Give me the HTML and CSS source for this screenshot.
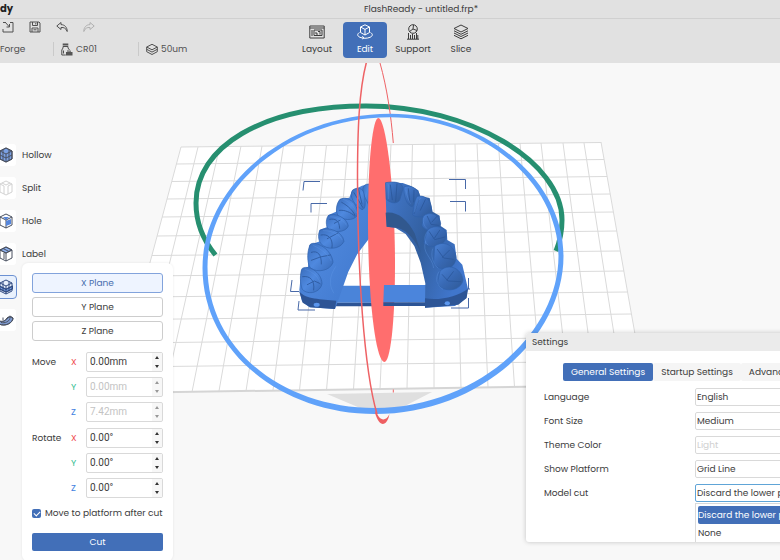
FILE: index.html
```html
<!DOCTYPE html>
<html lang="en">
<head>
<meta charset="utf-8">
<title>FlashReady - untitled.frp*</title>
<link rel="stylesheet" href="styles.css">
</head>
<body>
<div class="app">
  <header class="header">
    <div class="titlebar">
      <strong class="brand">dy</strong>
      <h1 class="doc-title">FlashReady - untitled.frp*</h1>
    </div>
    <div class="toolbar">
      <div class="toolbar-left">
        <div class="file-actions">
          <button class="icon-btn" aria-label="Import"><svg viewBox="0 0 12 12"><path d="M4 1.500H1M1 8v3h10V1.500H8M3 1l4.500 5M7.500 3v3H4.500"/></svg></button>
          <button class="icon-btn" aria-label="Save"><svg viewBox="0 0 12 12"><path d="M1 1h9l1 1v9H1zM3.500 1v3.500h5V1M3 11V7h6v4M4.500 8.800h3M6.800 2v1.500"/></svg></button>
          <button class="icon-btn" aria-label="Undo"><svg viewBox="0 0 12 12"><path d="M5 1.500.8 5 5 8.500V6.500c3-.3 4.800.7 6.200 4C11.200 6.500 9 3.700 5 3.600z"/></svg></button>
          <button class="icon-btn" aria-label="Redo" disabled><svg viewBox="0 0 12 12"><path d="M7 1.500 11.200 5 7 8.500V6.500c-3-.3-4.800.7-6.200 4C.8 6.500 3 3.700 7 3.600z"/></svg></button>
        </div>
        <div class="profile">
          <span class="profile-item machine">Forge</span>
          <span class="profile-item resin"><svg viewBox="0 0 12 13"><path d="M2 3.500h5v1.500l1.500 2M2 3.500v1.500L.8 7v5h4M2.500 7.500v3"/><path class="solid" d="M1.700.5h5.600v2H1.700zM5 9h6.500v3.500H5z"/><path d="M6 8l4 .2"/></svg>CR01</span>
          <span class="profile-item layer"><svg viewBox="0 0 12 12"><path d="M6 .8 11.300 3.500 6 6.300.7 3.500zM.7 5.800 6 8.600l5.300-2.800M.7 8.200 6 11l5.300-2.800"/><path d="M.7 3.500v4.700M11.300 3.500v4.700"/></svg>50um</span>
        </div>
      </div>
      <nav class="modes">
        <button class="mode"><svg viewBox="0 0 16 16"><path d="M.8 2h14.400v12H.8zM.8 4h14.400M3 6v6M5 6h8v5.500H5zM7 8v2h2M11 7.500v3M9 7.500h2"/></svg>Layout</button>
        <button class="mode active"><svg viewBox="0 0 16 16"><path d="M8 .8 12.500 3v5.500L8 11 3.500 8.500V3zM3.500 3 8 5.400 12.500 3M8 5.400V11"/><path d="M2.500 8.500C0 10 0 12 3 13.300c3 1.300 7 1.300 10 0 3-1.300 3-3.300.5-4.800M5 12.500l2 1.200L5.300 15"/></svg>Edit</button>
        <button class="mode"><svg viewBox="0 0 16 16"><circle cx="8" cy="5" r="4.300"/><path d="M8 5l.5-4M8 5l4 1.500M8 5 4.500 7.500M2 15.200h12M3.500 9v6M5.500 11v4M7.500 10v5M9.500 11v4M11.500 9v6M12.800 11v4"/></svg>Support</button>
        <button class="mode"><svg viewBox="0 0 16 16"><path d="M8 1 15 4.500 8 8 1 4.500zM1 6.800l7 3.500 7-3.500M1 9l7 3.500L15 9M1 11.300l7 3.500 7-3.500"/></svg>Slice</button>
      </nav>
    </div>
  </header>

  <main class="stage">
    <svg class="scene" viewBox="0 63 780 497" preserveAspectRatio="xMinYMin slice" role="img" aria-label="Dental arch on the build platform">
      <defs>
        <linearGradient id="baseL" x1="0" y1="0" x2="1" y2="1"><stop offset="0" stop-color="#3566b5"/><stop offset=".5" stop-color="#4b84d9"/><stop offset="1" stop-color="#3e76cb"/></linearGradient>
        <linearGradient id="baseR" x1="0" y1="0" x2="1" y2=".5"><stop offset="0" stop-color="#4379cd"/><stop offset=".55" stop-color="#325f9f"/><stop offset="1" stop-color="#4076cc"/></linearGradient>
        <linearGradient id="tooth" x1="0" y1="0" x2="1" y2="1"><stop offset="0" stop-color="#3a6dbb"/><stop offset=".5" stop-color="#4f89df"/><stop offset="1" stop-color="#386bb9"/></linearGradient>
        <linearGradient id="toothR" x1="0" y1="0" x2="1" y2="1"><stop offset="0" stop-color="#4a82d6"/><stop offset=".5" stop-color="#3869b4"/><stop offset="1" stop-color="#2f5996"/></linearGradient>
      </defs>

      <path fill="#fff" d="M181 147 601 142.500 644 385 115 393z"/>
      <g class="grid-lines">
        <path d="M181 147 601 142.500M176 164 604 159.500M172 181.500 607 176.500M167 199 610 194M162 217 613 212M157 236 617 231M152 255.500 620 251M146 276 624 271M141 297 627 292M135 319.500 631 314M129 343 635 337M122 367 640 361"/>
        <path d="M181 147 115 393M198 147 138 392M219.500 147 165 392M241 146 192 392M262 146 219 391M283.500 146 246 391M305 146 273 390M326.500 145 299.500 390M348 145 326.500 390M369.500 145 353.500 389M391 145 380 389M412.500 144 407 388M434 144 434 388M455 144 461 388M477 144 488 387M498.500 144 514.500 387M520 143 541.500 386M541 143 568.500 386M563 143 595 386M584 143 622 385M601 142 644 385"/>
        <path class="grid-front" d="M115 393 644 385"/>
      </g>
      <path fill="#dfdfdf" d="M327 394 432 392 401 408H360z"/>

      <path class="ring-green" d="M215.500 255C203 240 196 222 196 203 196 147 262 106 366 106 470 106 562 162 562 220 562 232 560 241 556 251"/>
      <path class="ring-red thin" d="M380 63C387 88 391 115 393.300 143M393.300 389.500V392.500"/>
      <path fill="#60a2fa" fill-rule="evenodd" d="M202.500 268C202.500 185 288 113.800 390 113.800 482 113.800 563.500 178 563.500 256 563.500 338 478 414 375 414 280 414 202.500 350 202.500 268zM207.500 267C207.500 350 284 408 375 408 474 408 558.500 335 558.500 256 558.500 181 480 117.200 390 117.200 291 117.200 207.500 187 207.500 267z"/>

      <g class="bounds"><path d="M303 190.500 304 181.500H320M311 212.500V203.500H327M449 179.500H465.500V189M450 201.500H465.500V211.500M292 280 290.500 291.500H299M299 301 298 310H315M468.500 278V289M467.500 289H470M468.500 298V308H451"/></g>

      <g transform="translate(280 160) scale(.3333)">
        <path fill="#4a84d9" d="M180 377H290V428H165z"/><path fill="#2c5495" d="M165 428H290V439H165z"/>
        <path fill="url(#baseL)" d="M268 72 246 77 216 92 208 113 180 117 168 155 144 166 140 202 118 210 120 244 88 255 84 320 64 330 58 390 66 424 88 442 165 447 178 412 205 335 232 282 268 235z"/>
        <path fill="#2d5495" d="M57 392C75 420 125 416 169 422L165 447 91 442 68 428z"/>
        <ellipse cx="110" cy="434" rx="9" ry="6" fill="#5a96ee"/>
        <g class="teeth" fill="url(#tooth)">
          <path d="M268 72C240 72 246 98 262 126L268 140z"/>
          <path d="M218 90C232 80 250 84 252 102 258 130 257 147 246 149 225 136 205 110 218 90z"/>
          <path d="M180 118C205 106 231 130 234 160 230 180 199 185 177 170 164 157 169 130 180 118z"/>
          <path d="M145 167C162 155 202 174 205 198 197 219 157 219 143 205 136 191 139 174 145 167z"/>
          <path d="M120 211C141 198 188 213 192 244 181 269 139 272 122 250 113 238 115 218 120 211z"/>
          <path d="M92 252C110 242 156 270 159 307 151 332 113 340 91 324 79 305 82 267 92 252z"/>
          <path d="M66 326C82 313 125 335 126 371 122 396 86 408 67 388 59 370 60 338 66 326z"/>
        </g>
        <g class="creases">
          <path d="M222 98 248 142M236 89 246 132M185 127C205 138 218 151 225 166M178 151C194 149 212 157 224 168M149 178C165 175 178 180 179 205M163 190 181 180M123 225C145 220 160 237 156 263M142 236 174 219M94 277C113 270 125 284 124 312M94 301 121 291 151 285M68 350C91 346 105 362 101 390M82 374 103 363 121 371"/>
          <path class="light" d="M190 118C210 125 224 142 229 158M151 170C172 170 194 184 199 195M130 212C154 211 180 224 186 239M101 257C123 265 148 288 153 302M75 328C101 336 116 352 121 370M167 320C149 346 145 374 161 399"/>
        </g>
      </g>

      <path fill="#ff6e6e" d="M378.300 118C386 118 395 190 395 264 395 325 390 362 384.500 362 376 362 368 302 368 220 368 158 373 118 378.300 118z"/>

      <g transform="translate(280 160) scale(.3333)">
        <path fill="#4b85dc" d="M312 375H440V427H310z"/><path fill="#2c5495" d="M310 427H440V438H310z"/>
        <path fill="url(#baseR)" d="M316 68 368 69 391 77 415 91 420 108 449 114 458 155 479 167 482 198 500 210 502 240 524 253 530 296 547 314 564 386 558 415 525 438 435 443 436 370 422 308 403 258 377 222 346 203 320 200z"/>
        <path fill="#31588e" d="M317 158C350 153 382 176 404 220L423 280C411 246 382 211 354 204L320 200z"/>
        <path fill="#2d5596" d="M435 415C482 423 533 408 564 386L560 414 535 434 435 443z"/>
        <ellipse cx="502" cy="430" rx="8" ry="6" fill="#5c98ef"/>
        <g class="teeth" fill="url(#toothR)">
          <path d="M317 68C341 64 370 65 369 87L359 121C346 137 325 124 319 118z"/>
          <path d="M372 81C391 72 416 87 419 108L397 140C379 139 370 101 372 81z"/>
          <path d="M413 109C438 103 457 127 454 152 437 179 405 171 398 165 401 140 405 114 413 109z"/>
          <path d="M430 169C445 153 479 160 482 191 478 217 435 220 426 196z"/>
          <path d="M441 213C454 194 496 195 499 224 502 257 451 271 432 249z"/>
          <path d="M464 259C487 240 526 253 528 293 526 331 479 340 461 307z"/>
          <path d="M480 334C501 310 543 320 549 360 543 394 490 400 472 371z"/>
        </g>
        <g class="creases">
          <path d="M331 75 337 119M351 72 347 124M385 86 390 131M402 91 401 126M417 120C407 138 408 150 403 160M436 119 421 151M442 169 453 193 475 196M456 186 471 169M448 215 464 239 495 231M463 235 479 211M472 268 491 294 520 298M487 292 508 271M487 344 504 363 542 365M501 360 520 335"/>
          <path class="light" d="M326 74 326 116M378 91C380 108 387 122 391 131M421 115C411 126 407 142 404 156M430 174C428 189 433 198 440 205M440 218C431 232 433 245 444 255M458 267C451 287 459 311 474 324M476 336C465 354 470 379 488 387M437 245C424 278 457 292 461 323"/>
        </g>
      </g>
      <path class="ring-red" d="M366.500 62C359 90 357.500 130 357.500 180 357.500 270 364 370 377 414"/>
      <path fill="#ee5f62" d="M376 411C379 420 385 423 389.500 414L388.500 418C385 427 379 426 375 413z"/>
    </svg>

    <aside class="tools">
      <button class="tool"><svg viewBox="0 0 16 16"><path fill="#7ba1e3" d="M8 1 14 4v8l-6 3-6-3V4z"/><path d="M8 1 14 4v8l-6 3-6-3V4zM2 4l6 3 6-3M8 7v8M5 2.500v11M11 2.500v11M2 8l6 3 6-3"/></svg><span>Hollow</span></button>
      <button class="tool" disabled><svg viewBox="0 0 16 16"><path d="M8 1 14 4v8l-6 3-6-3V4zM2 4l4 2M14 4l-4 2M6 6v8M10 6v8M4 3l4 2 4-2"/></svg><span>Split</span></button>
      <button class="tool"><svg viewBox="0 0 16 16"><path d="M8 1 14 4v8l-6 3-6-3V4zM2 4l6 3 6-3M8 7v8"/><path class="blue" d="M5 4h6L8 7zM8 8l5-2v5L8 13z"/></svg><span>Hole</span></button>
      <button class="tool"><svg viewBox="0 0 16 16"><path fill="#8db0ee" d="M2 4l6-3 6 3-6 3z"/><path d="M8 1 14 4v8l-6 3-6-3V4zM2 4l6 3 6-3M8 7v8M5 2.500l6 3M6 7v6"/></svg><span>Label</span></button>
      <button class="tool selected" aria-label="Cut"><svg viewBox="0 0 16 16"><path fill="#7aa1e4" d="M1.500 7 8 10l6.500-3v3L8 13 1.500 10z"/><path d="M8 1 14 4v8l-6 3-6-3V4zM2 4l6 3 6-3M8 7v8M1 7l7 3.500L15 7M1 9.500 8 13l7-3.500M5 2.500v10M11 2.500v10"/></svg></button>
      <button class="tool" aria-label="Model base"><svg viewBox="0 0 16 16"><path fill="#7f9bd0" d="M1 9c3 1 7 0 8-3l3-2 3 2c0 5-8 9-14 6z"/><path d="M1 9c3 1 7 0 8-3M1 12c6 3 14-1 14-6l-2-1-2 1-1-1-1 2M3 10.500c4 1 8-1 9-4M5 8V5.500M1 9v3"/></svg></button>
    </aside>

    <section class="cut-panel" aria-label="Cut">
      <div class="planes">
        <button class="plane chosen">X Plane</button>
        <button class="plane">Y Plane</button>
        <button class="plane">Z Plane</button>
      </div>
      <div class="transforms">
        <div class="axes">
          <span class="group">Move</span><label class="x" for="mx">X</label><span class="spin"><input id="mx" value="0.00mm"><i></i></span>
          <label class="y" for="my">Y</label><span class="spin off"><input id="my" value="0.00mm" disabled><i></i></span>
          <label class="z" for="mz">Z</label><span class="spin off"><input id="mz" value="7.42mm" disabled><i></i></span>
        </div>
        <div class="axes">
          <span class="group">Rotate</span><label class="x" for="rx">X</label><span class="spin"><input id="rx" value="0.00°"><i></i></span>
          <label class="y" for="ry">Y</label><span class="spin"><input id="ry" value="0.00°"><i></i></span>
          <label class="z" for="rz">Z</label><span class="spin"><input id="rz" value="0.00°"><i></i></span>
        </div>
      </div>
      <label class="check"><input type="checkbox" checked>Move to platform after cut</label>
      <button class="primary">Cut</button>
    </section>

    <section class="dialog" aria-label="Settings">
      <h2 class="dialog-title">Settings</h2>
      <div class="dialog-body">
        <div class="tabs">
          <button class="tab current">General Settings</button>
          <button class="tab">Startup Settings</button>
          <button class="tab">Advanced</button>
        </div>
        <div class="fields">
          <label for="lang">Language</label><select id="lang"><option>English</option></select>
          <label for="size">Font Size</label><select id="size"><option>Medium</option></select>
          <label for="theme">Theme Color</label><select id="theme" disabled><option>Light</option></select>
          <label for="plat">Show Platform</label><select id="plat"><option>Grid Line</option></select>
          <label for="cut">Model cut</label><select id="cut" class="focused"><option>Discard the lower part</option></select>
          <ul class="options">
            <li class="highlight">Discard the lower part</li>
            <li>None</li>
          </ul>
        </div>
      </div>
    </section>
  </main>
</div>
</body>
</html>
```
FILE: styles.css
```css
* { box-sizing: border-box; }

:root {
  --blue: #426fb8;
  --text: #3c3c3c;
  --line: #d9d9d9;
}

body {
  margin: 0;
  font: 9px/16px Poppins, Inter, "Open Sans", sans-serif;
  color: var(--text);
  background: #f8f8f8;
  overflow: hidden;
}

button, input, select {
  font: inherit;
  color: inherit;
  margin: 0;
  padding: 0;
}

button { border: 0; background: none; }

svg { fill: none; stroke: currentColor; display: block; }

.app { display: flex; flex-direction: column; min-height: 100vh; }

/* Header */
.header { background: #e1e1e1; }

.titlebar {
  display: grid;
  grid-template-columns: 13px 1fr;
  align-items: center;
  height: 19px;
  border-bottom: 1px solid #d0d0d0;
}
.brand { font-size: 10px; color: #222; }
.doc-title { margin: 0; padding-left: 49px; text-align: center; font-size: 9px; font-weight: 400; }

.toolbar { display: grid; grid-template-columns: 295px 1fr; height: 44px; }
.file-actions { display: flex; gap: 15px; padding: 1px 0 0 2px; }
.icon-btn { width: 12px; height: 13px; color: #505050; }
.icon-btn svg { width: 12px; height: 12px; }
.icon-btn:disabled { color: #b0b0b0; }

.profile { display: flex; padding-top: 9px; }
.profile-item { display: flex; align-items: center; gap: 3px; height: 14px; color: #505050; }
.profile-item svg { width: 12px; height: 13px; }
.profile-item .solid { fill: #555; stroke: none; }
.machine { width: 53px; }
.resin { width: 85px; padding-left: 7px; border-left: 1px solid #cacaca; }
.layer { padding-left: 7px; border-left: 1px solid #cacaca; }

.modes { display: flex; gap: 4px; padding-top: 3px; }
.mode {
  display: flex;
  flex-direction: column;
  align-items: center;
  gap: 1px;
  width: 44px;
  height: 36px;
  padding-top: 2px;
  border-radius: 4px;
}
.mode svg { width: 16px; height: 16px; }
.mode.active { background: var(--blue); color: #fff; }

/* Viewport */
.stage { position: relative; flex: 1; overflow: hidden; }
.scene { position: absolute; inset: 0; width: 100%; height: 100%; stroke: none; }
.grid-lines { stroke: #dadada; stroke-width: 1; }
.grid-front { stroke: #d5d5d5; stroke-width: 2; }
.ring-green { stroke: #268f70; stroke-width: 5; }
.ring-red { stroke: #ee6265; stroke-width: 1.5; }
.ring-red.thin { stroke-width: 1; }
.bounds { stroke: #4869a8; stroke-width: 1; }
.teeth { stroke: #2f60aa; stroke-width: 2; }
.creases { stroke: #2b579b; stroke-width: 3; stroke-linecap: round; opacity: .8; }
.creases .light { stroke: #659ceb; stroke-width: 2; opacity: .6; }

/* Tool strip */
.tools {
  position: absolute;
  top: 81px;
  left: -6px;
  display: flex;
  flex-direction: column;
  align-items: flex-start;
  gap: 11px;
}
.tool { display: flex; align-items: center; gap: 6px; }
.tool svg {
  width: 22px;
  height: 22px;
  padding: 3px 2px 3px 4px;
  background: #fff;
  border-radius: 3px;
  color: #4a5160;
}
.tool .blue { fill: #5686dc; stroke: none; }
.tool:disabled { color: var(--text); }
.tool:disabled svg { color: #d2d2d2; }
.tool.selected svg { background: #e9f1fd; outline: 1px solid #6c91d2; color: #304a80; }

/* Cut panel */
.cut-panel {
  position: absolute;
  top: 200px;
  left: 22px;
  width: 151px;
  padding: 10px;
  background: #fff;
  border-radius: 6px;
  box-shadow: 0 0 3px rgba(0, 0, 0, .08);
}
.planes { display: grid; gap: 4px; }
.plane { height: 20px; border: 1px solid #cdcdcd; border-radius: 3px; background: #fff; }
.plane.chosen { color: #496fae; border-color: #82a3dc; background: #eef4ff; }

.transforms { display: grid; gap: 6px; margin-top: 11px; }
.axes {
  display: grid;
  grid-template-columns: 39px 15px 1fr;
  grid-auto-rows: 20px;
  align-items: center;
  row-gap: 5px;
}
.axes .group { grid-column: 1; }
.axes label { grid-column: 2; }
.x { color: #ef4d50; }
.y { color: #32bd91; }
.z { color: #427fe0; }
.spin {
  display: flex;
  min-width: 0;
  height: 20px;
  border: 1px solid var(--line);
  border-radius: 2px;
  background: #fff;
}
.spin input {
  flex: 1;
  min-width: 0;
  width: 100%;
  border: 0;
  padding-left: 3px;
  background: none;
  font-family: Roboto, sans-serif;
  font-size: 10px;
}
.spin i {
  display: flex;
  flex: none;
  flex-direction: column;
  justify-content: space-between;
  align-items: center;
  width: 10px;
  padding: 3px 0;
  background: #f7f7f7;
}
.spin i::before, .spin i::after { content: ""; border: 2px solid transparent; }
.spin i::before { border-top: 0; border-bottom: 3px solid #333; }
.spin i::after { border-bottom: 0; border-top: 3px solid #333; }
.spin.off input { color: #c3c3c3; }
.spin.off i { background: #f0f0f0; opacity: .5; }

.check { display: flex; align-items: center; gap: 4px; margin-top: 7px; white-space: nowrap; }
.check input {
  appearance: none;
  width: 9px;
  height: 9px;
  border-radius: 2px;
  background: var(--blue);
}
.check input:checked::before {
  content: "";
  display: block;
  width: 5px;
  height: 3px;
  margin: 2px;
  border: solid #fff;
  border-width: 0 0 1px 1px;
  transform: rotate(-45deg);
}
.primary {
  display: block;
  width: 100%;
  height: 18px;
  margin-top: 12px;
  border-radius: 2px;
  color: #fff;
  background: var(--blue);
}

/* Settings window */
.dialog {
  position: absolute;
  top: 270px;
  left: 526px;
  width: 400px;
  height: 209px;
  overflow: hidden;
  background: #fff;
  border-radius: 3px;
  box-shadow: 0 0 5px rgba(0, 0, 0, .22);
}
.dialog-title {
  margin: 0;
  padding: 1px 6px;
  font-size: 9px;
  font-weight: 400;
  background: #ebebeb;
}
.dialog-body { padding: 12px 18px 0; }
.tabs { display: flex; margin-left: 19px; }
.tab { height: 18px; padding: 0 8px; border-radius: 2px; background: #f5f5f5; white-space: nowrap; }
.tab.current { color: #fff; background: var(--blue); }

.fields {
  display: grid;
  grid-template-columns: 151px 1fr;
  grid-auto-rows: 18px;
  row-gap: 6px;
  align-items: center;
  margin-top: 7px;
}
select {
  appearance: none;
  width: 100%;
  height: 18px;
  padding-left: 1px;
  border: 1px solid var(--line);
  border-radius: 2px;
  background: #fff;
}
select:disabled { color: #cfcfcf; opacity: 1; }
select.focused { border-color: #60a5d7; }
.options {
  grid-column: 2;
  align-self: start;
  margin: -5px 0 0;
  padding: 2px;
  list-style: none;
  border: 1px solid var(--line);
  background: #fff;
}
.options li { height: 18px; line-height: 18px; }
.options .highlight { color: #fff; background: var(--blue); border-radius: 2px; }
```
